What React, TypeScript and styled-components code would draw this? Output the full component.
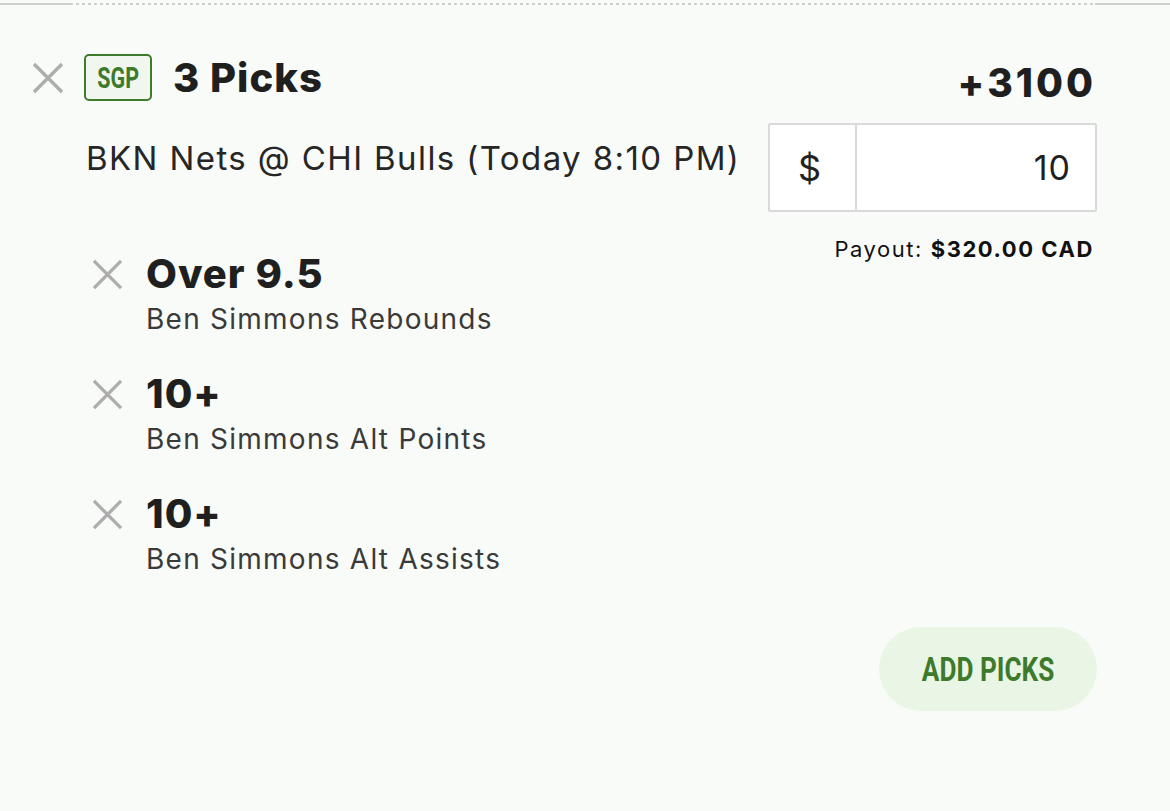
import { ReactElement } from "react";
import styled, { createGlobalStyle } from "styled-components";

const GlobalStyle = createGlobalStyle`
    html, body {
        margin: 0;
        padding: 0;
        background: #f9fbf8;
        font-family: Inter, "Noto Sans", sans-serif;
        color: #222;
    }
`;

const Page: any = styled.div`
    width: 1170px;
    height: 811px;
    background: #f9fbf8;
    overflow: hidden;
`;

const TopRule: any = styled.div`
    display: flex;
    margin-top: 3px;
    height: 2px;
`;

const RuleSolid: any = styled.div`
    width: ${(p: any) => p.w}px;
    background: #cfcfcf;
`;

const RuleDotted: any = styled.div`
    flex: 1;
    background: repeating-linear-gradient(90deg, #cfcfcf 0 3px, transparent 3px 6px);
`;

const Card: any = styled.div`
    padding: 49px 73px 0 32px;
`;

const Header: any = styled.div`
    display: flex;
    align-items: center;
    justify-content: space-between;
    height: 47px;
`;

const HeaderLeft: any = styled.div`
    display: flex;
    align-items: center;
`;

const Badge: any = styled.div`
    display: flex;
    align-items: center;
    justify-content: center;
    width: 68px;
    height: 47px;
    box-sizing: border-box;
    margin-left: 20px;
    border: 2.5px solid #3e7b2c;
    border-radius: 5px;
    background: #f1f6ee;
    overflow: hidden;
`;

const Condensed: any = styled.span`
    display: inline-block;
    font-family: Roboto, "Liberation Sans", sans-serif;
    font-weight: 700;
    color: #3d7a2b;
    font-size: ${(p: any) => p.size}px;
    transform: scaleX(${(p: any) => p.sx});
    white-space: nowrap;
`;

const Title: any = styled.div`
    margin-left: 21px;
    font-size: 40px;
    font-weight: 800;
    letter-spacing: 1px;
    line-height: 47px;
    color: #1f1f1f;
`;

const Odds: any = styled.div`
    margin-top: 10px;
    padding-right: 1px;
    font-size: 39px;
    font-weight: 800;
    letter-spacing: 3px;
    color: #1f1f1f;
`;

const Body: any = styled.div`
    display: grid;
    grid-template-columns: 1fr 329px;
    margin-top: 22px;
`;

const Event: any = styled.div`
    margin: 15px 0 0 54px;
    font-size: 33px;
    letter-spacing: 1.4px;
    line-height: 40px;
    color: #262626;
    white-space: nowrap;
`;

const Legs: any = styled.div`
    display: flex;
    flex-direction: column;
    gap: 33px;
    margin: 74px 0 0 60px;
`;

const Leg: any = styled.div`
    display: grid;
    grid-template-columns: 54px 1fr;
    align-items: center;
`;

const LegTitle: any = styled.div`
    font-size: 40px;
    font-weight: 800;
    letter-spacing: 1px;
    line-height: 44px;
    color: #1f1f1f;
`;

const LegSub: any = styled.div`
    grid-column: 2;
    margin-top: 3px;
    font-size: 28px;
    letter-spacing: 1.25px;
    line-height: 40px;
    color: #3a3a3a;
`;

const Stake: any = styled.div`
    display: flex;
    height: 89px;
    box-sizing: border-box;
    border: 2px solid #d9d9d9;
    border-radius: 2px;
    background: #fff;
`;

const Currency: any = styled.div`
    display: flex;
    align-items: center;
    justify-content: center;
    width: 87px;
    padding-right: 6px;
    box-sizing: border-box;
    border-right: 2px solid #d9d9d9;
    font-size: 36px;
    color: #222;
`;

const Amount: any = styled.div`
    flex: 1;
    display: flex;
    align-items: center;
    justify-content: flex-end;
    padding-right: 24px;
    font-size: 34px;
    letter-spacing: 1px;
    color: #1f1f1f;
`;

const Payout: any = styled.div`
    margin-top: 24px;
    padding-right: 3px;
    text-align: right;
    font-size: 22px;
    letter-spacing: 1.55px;
    color: #111;

    b {
        font-weight: 700;
    }
`;

const Footer: any = styled.div`
    display: flex;
    justify-content: flex-end;
    margin-top: 48px;
`;

const AddButton: any = styled.button`
    display: flex;
    align-items: center;
    justify-content: center;
    width: 218px;
    height: 84px;
    border: none;
    border-radius: 42px;
    background: #eaf6e5;
    padding: 0;
    overflow: hidden;
`;

const CloseIcon = ({ size }: { size: number }): ReactElement => (
    <svg width={size} height={size} viewBox="0 0 32 32">
        <path d="M2 2 L30 30 M30 2 L2 30" stroke="#adadad" strokeWidth="3.4" fill="none" />
    </svg>
);

const legs: Array<{ title: string; sub: string }> = [
    { title: "Over 9.5", sub: "Ben Simmons Rebounds" },
    { title: "10+", sub: "Ben Simmons Alt Points" },
    { title: "10+", sub: "Ben Simmons Alt Assists" },
];

export default function App(): ReactElement {
    return (
        <Page>
            <GlobalStyle />
            <TopRule>
                <RuleSolid w={70} />
                <RuleDotted />
                <RuleSolid w={75} />
            </TopRule>
            <Card>
                <Header>
                    <HeaderLeft>
                        <CloseIcon size={32} />
                        <Badge>
                            <Condensed size={29} sx={0.74}>SGP</Condensed>
                        </Badge>
                        <Title>3 Picks</Title>
                    </HeaderLeft>
                    <Odds>+3100</Odds>
                </Header>
                <Body>
                    <div>
                        <Event>BKN Nets @ CHI Bulls (Today 8:10 PM)</Event>
                        <Legs>
                            {legs.map((leg, i) => (
                                <Leg key={i}>
                                    <CloseIcon size={31} />
                                    <LegTitle>{leg.title}</LegTitle>
                                    <LegSub>{leg.sub}</LegSub>
                                </Leg>
                            ))}
                        </Legs>
                    </div>
                    <div>
                        <Stake>
                            <Currency>$</Currency>
                            <Amount>10</Amount>
                        </Stake>
                        <Payout>
                            Payout: <b>$320.00 CAD</b>
                        </Payout>
                    </div>
                </Body>
                <Footer>
                    <AddButton>
                        <Condensed size={34} sx={0.77}>ADD PICKS</Condensed>
                    </AddButton>
                </Footer>
            </Card>
        </Page>
    );
}
